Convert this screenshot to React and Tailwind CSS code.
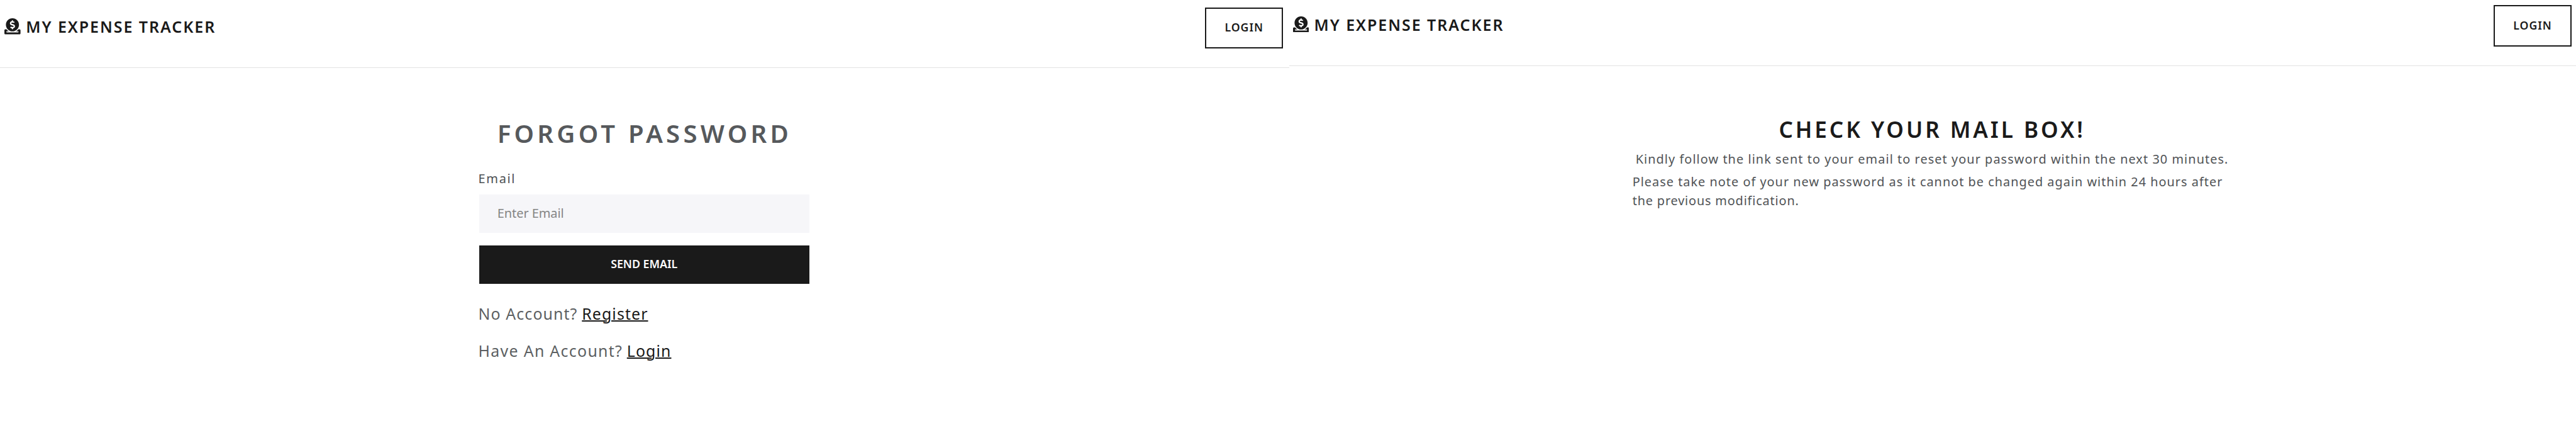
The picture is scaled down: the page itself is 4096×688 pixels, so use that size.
import React from "react";
import { FaDonate } from "react-icons/fa";

function Header({ className, brandClass, loginClass }) {
  return (
    <header className={`flex items-start justify-between border-b border-[#e2e2e2] ${className}`}>
      <div className={`flex items-start ${brandClass}`}>
        <FaDonate className="mt-[4.1px] size-[25.6px] text-[#1a1a1a]" />
        <span className="ml-[8.4px] text-[25px] leading-[34px] font-semibold tracking-[1.95px] text-[#1a1a1a]">MY EXPENSE TRACKER</span>
      </div>
      <button className={`flex h-[65.3px] w-[124px] items-center justify-center border-2 border-[#1a1a1a] pb-[3px] text-[17.7px] leading-[24px] font-semibold tracking-[0.98px] text-[#1a1a1a] ${loginClass}`}>
        LOGIN
      </button>
    </header>
  );
}

function ForgotPassword() {
  return (
    <section className="w-[2050.4px] shrink-0">
      <Header className="h-[108px] pl-[7.3px] pr-[10.2px]" brandClass="pt-[25.1px]" loginClass="mt-[11.9px]" />
      <form className="ml-[761.5px] flex w-[525.4px] flex-col pt-[79.7px]">
        <h1 className="pl-[1.5px] text-center text-[40.1px] leading-[48px] font-semibold tracking-[5.25px] text-[#56595c]">FORGOT PASSWORD</h1>
        <label className="mt-[32.9px] -ml-[0.9px] text-[20px] leading-[30px] tracking-[1.602px] text-[#4d5053]">Email</label>
        <div className="mt-[10.5px] flex h-[60.9px] items-center bg-[#f6f6f9] pb-[0.6px] pl-[29.3px] text-[20px] leading-[30px] tracking-[-0.09px] text-[#858585]">Enter Email</div>
        <button type="button" className="mt-[19.9px] flex h-[61px] items-center justify-center bg-[#1a1a1a] pb-[3px] text-[17.8px] leading-[24px] font-semibold text-white">SEND EMAIL</button>
        <p className="mt-[29.4px] -ml-[0.9px] flex gap-[6.8px] text-[24.9px] leading-[36px] tracking-[1.087px] text-[#5c5f62]">
          <span>No Account?</span>
          <a className="tracking-[1.1px] text-[#1a1a1a] underline decoration-2 underline-offset-1">Register</a>
        </p>
        <p className="mt-[22.3px] -ml-[0.9px] flex gap-[6.6px] text-[24.9px] leading-[36px] tracking-[1.3px] text-[#5c5f62]">
          <span>Have An Account?</span>
          <a className="tracking-[1.1px] text-[#1a1a1a] underline decoration-2 underline-offset-1">Login</a>
        </p>
      </form>
    </section>
  );
}

function CheckMailBox() {
  return (
    <section className="flex-1">
      <Header className="h-[104.7px] pl-[5.2px] pr-[7px]" brandClass="pt-[21.6px]" loginClass="mt-[8.4px]" />
      <div className="ml-[545.3px] w-[953px] pt-[78px] text-[19.9px] leading-[30.4px] text-[#505356]">
        <h1 className="text-center text-[35.2px] leading-[44px] font-semibold tracking-[3.9px] text-[#1a1a1a]">CHECK YOUR MAIL BOX!</h1>
        <p className="mt-[11.5px] pl-[5px] whitespace-nowrap tracking-[1.05px]">Kindly follow the link sent to your email to reset your password within the next 30 minutes.</p>
        <p className="mt-[5.4px] whitespace-nowrap tracking-[1px]">
          Please take note of your new password as it cannot be changed again within 24 hours after
          <br />
          <span className="tracking-[0.82px]">the previous modification.</span>
        </p>
      </div>
    </section>
  );
}

export default function App() {
  return (
    <main className="flex h-[688px] w-[4096px] overflow-hidden bg-white font-['Noto_Sans',sans-serif]">
      <ForgotPassword />
      <CheckMailBox />
    </main>
  );
}
